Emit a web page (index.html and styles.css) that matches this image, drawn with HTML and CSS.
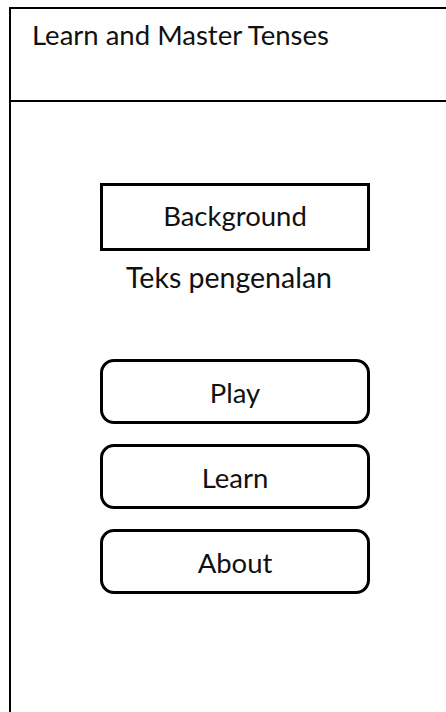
FILE: index.html
```html
<!DOCTYPE html>
<html lang="en">
<head>
<meta charset="utf-8">
<title>Learn and Master Tenses</title>
<link rel="stylesheet" href="styles.css">
</head>
<body>
<div class="frame">
  <header class="header">
    <h1 class="title">Learn and Master Tenses</h1>
  </header>
  <main class="main">
    <div class="bg-box">Background</div>
    <p class="intro">Teks pengenalan</p>
    <nav class="menu">
      <button class="menu-btn" type="button">Play</button>
      <button class="menu-btn" type="button">Learn</button>
      <button class="menu-btn" type="button">About</button>
    </nav>
  </main>
</div>
</body>
</html>
```

FILE: styles.css
```css
html, body {
  margin: 0;
  padding: 0;
  background: #ffffff;
  overflow: hidden;
}

body {
  font-family: "Lato", "Open Sans", sans-serif;
  color: #111111;
}

.frame {
  box-sizing: border-box;
  margin: 7px 0 0 9px;
  height: 705px;
  border-top: 2px solid #000000;
  border-left: 2px solid #000000;
}

.header {
  box-sizing: border-box;
  height: 93px;
  border-bottom: 2px solid #000000;
}

.title {
  margin: 0;
  padding: 10px 0 0 21px;
  font-size: 27.5px;
  font-weight: 400;
  line-height: 32px;
  white-space: nowrap;
}

.main {
  display: flex;
  flex-direction: column;
  align-items: center;
  padding: 81px 0 0 13px;
}

.bg-box {
  box-sizing: border-box;
  width: 270px;
  height: 68px;
  border: 3px solid #000000;
  display: flex;
  align-items: center;
  justify-content: center;
  font-size: 27.5px;
  padding-bottom: 4px;
}

.intro {
  margin: 10px 0 0;
  font-size: 28.5px;
  line-height: 32px;
  transform: translateX(-6px);
}

.menu {
  display: flex;
  flex-direction: column;
  gap: 20px;
  margin-top: 66px;
}

.menu-btn {
  box-sizing: border-box;
  width: 270px;
  height: 65px;
  border: 3px solid #000000;
  border-radius: 14px;
  background: #ffffff;
  font-family: inherit;
  font-size: 27.5px;
  color: #111111;
  padding: 2px 0 0;
}
```
